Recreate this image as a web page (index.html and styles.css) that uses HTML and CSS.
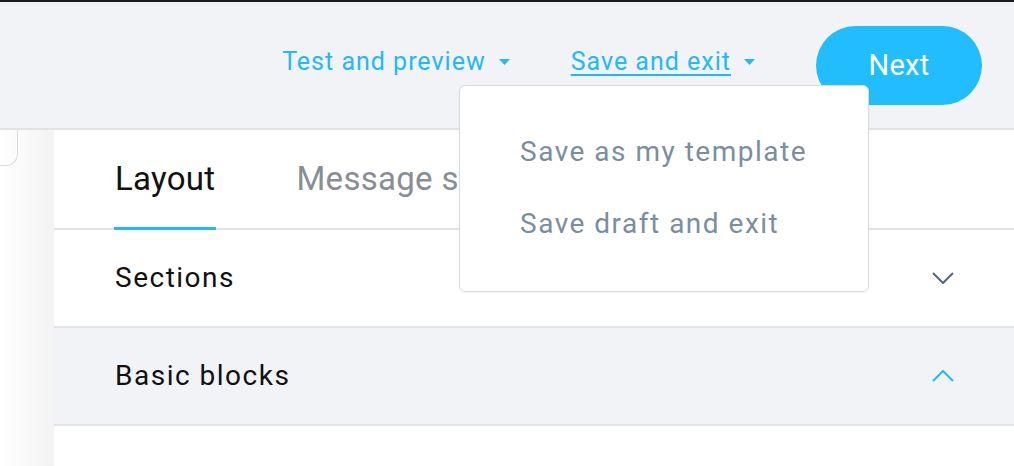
FILE: index.html
```html
<!DOCTYPE html>
<html lang="en">
<head>
<meta charset="utf-8">
<title>Editor</title>
<link rel="stylesheet" href="styles.css">
</head>
<body>
<div class="topline"></div>
<header class="header">
  <a class="hlink">
    <span>Test and preview</span>
    <svg class="caret" width="11" height="6" viewBox="0 0 11 6"><path d="M0 0h11L5.5 6z" fill="#22b8fb"/></svg>
  </a>
  <a class="hlink">
    <span class="under">Save and exit</span>
    <svg class="caret" width="11" height="6" viewBox="0 0 11 6"><path d="M0 0h11L5.5 6z" fill="#22b8fb"/></svg>
  </a>
  <button class="next">Next</button>
</header>
<div class="body">
  <aside class="side"><div class="side-box"></div></aside>
  <main class="panel">
    <nav class="tabs">
      <div class="tab active">Layout</div>
      <div class="tab">Message settings</div>
    </nav>
    <div class="row">
      <span>Sections</span>
      <svg class="chev" width="22" height="12" viewBox="0 0 22 12"><path d="M1 1l10 10L21 1" fill="none" stroke="#56667a" stroke-width="2"/></svg>
    </div>
    <div class="row open">
      <span>Basic blocks</span>
      <svg class="chev" width="22" height="12" viewBox="0 0 22 12"><path d="M1 11L11 1l10 10" fill="none" stroke="#22b8fb" stroke-width="2"/></svg>
    </div>
  </main>
</div>
<div class="menu">
  <div class="menu-item">Save as my template</div>
  <div class="menu-item">Save draft and exit</div>
</div>
</body>
</html>
```
FILE: styles.css
```css
* { box-sizing: border-box; }
html, body { margin: 0; padding: 0; }
body {
  width: 1014px;
  height: 466px;
  overflow: hidden;
  background: #fff;
  font-family: Roboto, "Liberation Sans", sans-serif;
  position: relative;
}
.topline { height: 2px; background: #1c1c1c; }
.header {
  height: 128px;
  background: #f2f3f7;
  border-bottom: 2px solid #e1e2e6;
  display: flex;
  align-items: center;
  justify-content: flex-end;
  padding-right: 32px;
  gap: 61px;
}
.hlink {
  display: flex;
  align-items: center;
  gap: 13px;
  color: #22b8fb;
  font-size: 25px;
  letter-spacing: 1px;
  margin-top: -8px;
}
.hlink .under { text-decoration: underline; text-underline-offset: 4px; text-decoration-thickness: 1.5px; }
.caret { margin-top: 2px; }
.next {
  width: 166px;
  height: 79px;
  border: none;
  border-radius: 40px;
  background: #22bdfd;
  color: #fff;
  font-family: inherit;
  font-size: 29px;
  letter-spacing: 0.3px;
  padding: 0;
}
.body { display: flex; height: 336px; }
.side {
  width: 54px;
  background: linear-gradient(to right, #ffffff, #f3f3f3);
}
.side-box {
  width: 18px;
  height: 36px;
  border: 1.5px solid #dcdcdc;
  border-top: none;
  border-left: none;
  border-bottom-right-radius: 12px;
}
.panel { flex: 1; overflow: hidden; }
.tabs {
  height: 100px;
  display: flex;
  align-items: stretch;
  gap: 81px;
  padding-left: 61px;
  border-bottom: 2px solid #e3e3e5;
}
.tab {
  display: flex;
  align-items: center;
  font-size: 33px;
  letter-spacing: 0.3px;
  color: #898e95;
  padding-bottom: 2px;
  white-space: nowrap;
  position: relative;
}
.tab.active { color: #111; }
.tab.active::after {
  content: "";
  position: absolute;
  left: -1px;
  right: -1px;
  bottom: -2px;
  height: 3px;
  background: #22b8fb;
}
.row {
  height: 98px;
  display: flex;
  align-items: center;
  justify-content: space-between;
  padding: 0 60px 0 61px;
  font-size: 28px;
  letter-spacing: 1.5px;
  color: #111;
  border-bottom: 2px solid #e3e3e5;
}
.row span { margin-top: -2px; }
.row.open { background: #f2f3f7; }
.menu {
  position: absolute;
  left: 459px;
  top: 85px;
  width: 410px;
  height: 207px;
  background: #fff;
  border: 1.5px solid #dadbdd;
  border-radius: 6px;
  box-shadow: 0 1px 3px rgba(0,0,0,0.05);
  padding: 49px 0 0 60px;
  display: flex;
  flex-direction: column;
  gap: 39px;
}
.menu-item {
  font-size: 28px;
  letter-spacing: 1.5px;
  color: #7a8ea1;
  line-height: 33px;
}
```
